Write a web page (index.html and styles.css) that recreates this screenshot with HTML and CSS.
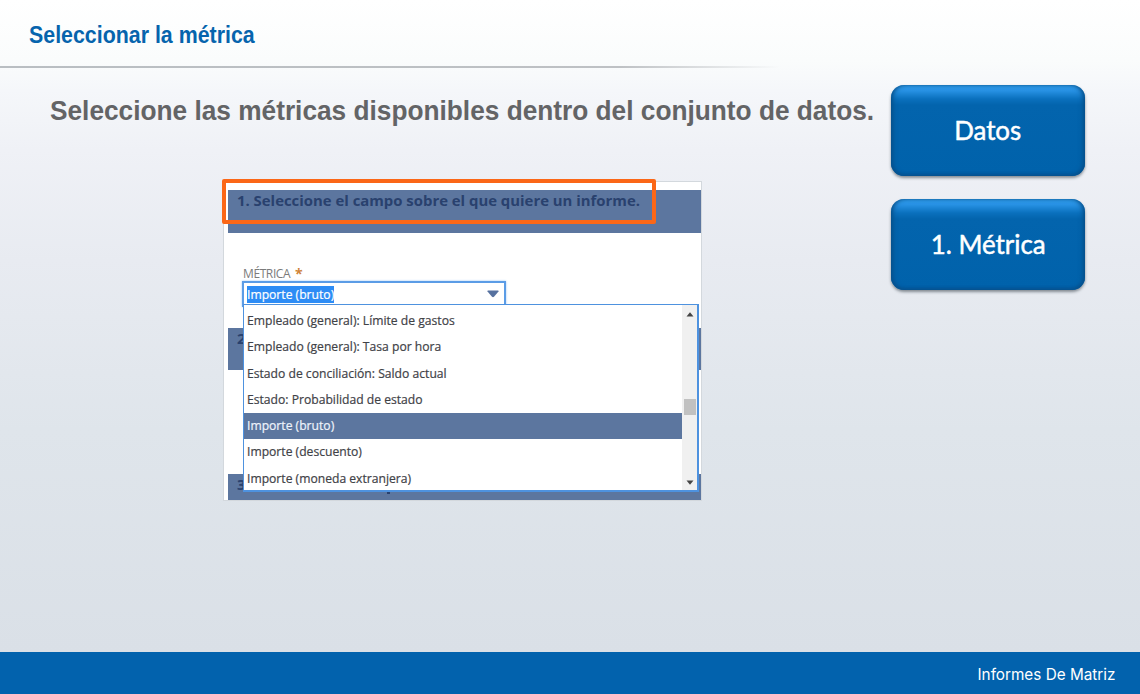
FILE: index.html
```
<!DOCTYPE html>
<html lang="es">
<head>
<meta charset="utf-8">
<title>Informes De Matriz</title>
<link rel="stylesheet" href="styles.css">
</head>
<body>
<div class="slide">
  <header class="header"><h1 class="title">Seleccionar la métrica</h1></header>
  <main class="main">
    <section class="content">
      <h2 class="lead">Seleccione las métricas disponibles dentro del conjunto de datos.</h2>
      <div class="panel">
        <div class="band band-first"><span class="band-text">1. Seleccione el campo sobre el que quiere un informe.</span></div>
        <div class="band band-second"><span class="band-text">2</span></div>
        <div class="band band-third"><span class="band-text">3</span><span class="descender"></span></div>
        <div class="highlight"></div>
        <div class="field">
          <div class="label"><span class="label-text">MÉTRICA</span><span class="required">*</span></div>
          <div class="combo"><span class="selection"><span class="item-text">Importe (bruto)</span></span>
            <svg class="arrow" width="12" height="8" viewBox="0 0 12 8"><path d="M1 .5h10q.8 0 .5 1L7 6.800q-1 .8-2 0L.5 1.500q-.3-1 .5-1z" fill="#56719f"/></svg>
          </div>
        </div>
        <div class="dropdown">
          <ul class="options">
            <li><span class="item-text">Empleado (general): Límite de gastos</span></li>
            <li><span class="item-text">Empleado (general): Tasa por hora</span></li>
            <li><span class="item-text">Estado de conciliación: Saldo actual</span></li>
            <li><span class="item-text">Estado: Probabilidad de estado</span></li>
            <li class="active"><span class="item-text">Importe (bruto)</span></li>
            <li><span class="item-text">Importe (descuento)</span></li>
            <li><span class="item-text">Importe (moneda extranjera)</span></li>
          </ul>
          <div class="scrollbar">
            <svg width="8" height="5" viewBox="0 0 8 5"><path d="M4 .3 7.500 4.500h-7z" fill="#444"/></svg>
            <div class="thumb"></div>
            <svg width="8" height="5" viewBox="0 0 8 5"><path d="M4 4.700.5.5h7z" fill="#444"/></svg>
          </div>
        </div>
      </div>
    </section>
    <nav class="steps">
      <div class="step"><span class="step-text">Datos</span></div>
      <div class="step"><span class="step-text">1. Métrica</span></div>
    </nav>
  </main>
  <footer class="footer"><span class="footer-text">Informes De Matriz</span></footer>
</div>
</body>
</html>
```
FILE: styles.css
```
* { box-sizing: border-box; }
body { margin: 0; }
.slide {
  width: 1140px; height: 694px; overflow: hidden;
  display: flex; flex-direction: column;
  background: linear-gradient(#ffffff 0, #fafcfc 60px, #f5f7fa 90px, #eff1f6 150px, #e8ebf1 260px, #dfe5eb 430px, #dae0e7 652px);
  font-family: "Liberation Sans", Arial, sans-serif;
}
.header {
  height: 68px; padding: 21px 0 0 29px;
  background: linear-gradient(90deg, #b9bec2 0, #bec1c4 620px, rgba(192,195,198,0) 780px) bottom / 100% 2px no-repeat;
}
.title, .lead { margin: 0; white-space: nowrap; width: max-content; transform-origin: 0 50%; font-weight: bold; }
.title { font-size: 23px; line-height: 28px; color: #0664ad; transform: scaleX(.929); }
.main { flex: 1; display: flex; }
.content { width: 891px; padding-top: 24px; }
.lead { margin-left: 50px; font-size: 28.5px; line-height: 36px; color: #636466; transform: scaleX(.921); }
.panel {
  position: relative; width: 479px; height: 320px; margin: 53px 0 0 223px;
  background: #fff; border: 1px solid #d3d8dd; font-family: "Open Sans", "Noto Sans", sans-serif;
}
.band { position: absolute; left: 4px; right: 0; background: #5c769f; color: #29416e; padding-left: 9px; font-weight: bold; font-size: 15px; line-height: 20px; white-space: nowrap; overflow: hidden; }
.band-first { top: 8px; height: 43px; }
.band-second { top: 146px; height: 42px; }
.band-third { top: 292px; height: 26px; }
.band-text { display: inline-block; transform-origin: 0 50%; transform: scaleX(.992); }
.descender { display: inline-block; width: 3px; height: 2px; margin-left: 141px; vertical-align: -4px; background: #29416e; }
.highlight { position: absolute; left: -2px; top: -3px; width: 434px; height: 45px; border: 4px solid #fb6717; border-radius: 2px; }
.field { position: absolute; left: 18px; top: 82px; width: 264px; }
.label { display: flex; height: 17px; padding: 1px 0 0 1px; align-items: center; font-size: 12px; color: #7b7b7b; }
.label-text { width: 47px; letter-spacing: -.4px; }
.required { margin-left: 5px; color: #cf8439; font-size: 14px; font-weight: bold; line-height: 15px; height: 15px; }
.combo { height: 26px; border: 2px solid #5b9ce6; background: #fff; display: flex; align-items: center; justify-content: space-between; padding: 0 5px 0 3px; box-shadow: 0 0 2px #9cc8f5; }
.selection { background: #2d8cf5; color: #fff; height: 17px; line-height: 17px; width: 87px; font-size: 12.5px; white-space: nowrap; }
.dropdown { position: absolute; left: 19px; top: 122px; width: 456px; height: 188px; border: 2px solid #4e92df; border-width: 1px 2px 2px 1px; background: #fff; display: flex; }
.options { list-style: none; margin: 0; padding: 3px 0 0; width: 438px; font-size: 12.5px; color: #3f4247; }
.options li { height: 26.300px; line-height: 26.300px; padding-left: 3px; white-space: nowrap; }
.options .active { background: #5c769f; color: #eef3fb; }
.item-text { display: inline-block; transform-origin: 0 50%; transform: scaleX(.971); -webkit-text-stroke: .2px currentColor; }
.scrollbar { width: 15px; background: #f0f0f0; display: flex; flex-direction: column; align-items: center; padding: 7px 0 5px; }
.thumb { width: 12px; height: 16px; background: #c1c1c1; margin: 82px 0 auto; }
.steps { padding-top: 17px; display: flex; flex-direction: column; gap: 23px; }
.step {
  width: 194px; height: 91px; border-radius: 13px; display: flex; align-items: center; justify-content: center;
  background: linear-gradient(#36a5f5 0, #2690e2 6px, #0a70bd 14px, #0364ad 20px, #0062ab 100%);
  box-shadow: inset 3px 0 5px -1px #07508a, inset -3px 0 5px -1px #07508a, inset 0 -2px 3px #07579a, 0 2px 3px rgba(50,60,70,.55);
  color: #fff; font: 27.5px Lato, "Open Sans", sans-serif;
}
.step-text { display: inline-block; transform: translateY(-1px) scaleX(.94); -webkit-text-stroke: .5px #fff; }
.footer { height: 42px; background: #0262ad; color: #fff; display: flex; align-items: center; justify-content: flex-end; padding: 1px 25px 0 0; font: 16px Inter, sans-serif; }
.footer-text { transform: scaleX(.955); transform-origin: 100% 50%; }
```
